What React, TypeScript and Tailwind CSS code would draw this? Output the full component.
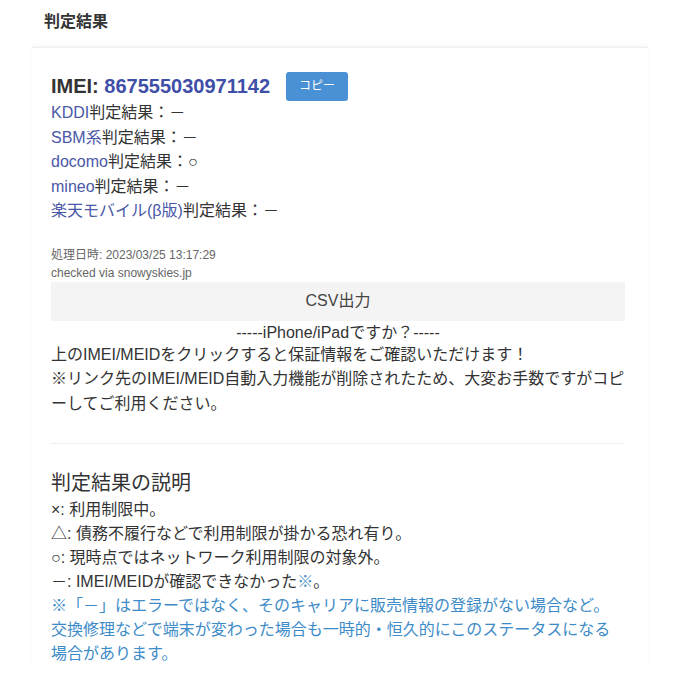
export default function App() {
  const carriers = [
    { name: "KDDI", result: "－" },
    { name: "SBM系", result: "－" },
    { name: "docomo", result: "○" },
    { name: "mineo", result: "－" },
    { name: "楽天モバイル(β版)", result: "－" },
  ];

  return (
    <div
      className="min-h-[680px] bg-white text-[#333]"
      style={{ fontFamily: '"Liberation Sans", "Noto Sans CJK JP", sans-serif' }}
    >
      <div className="px-[44px] pt-[12px] pb-[15px] text-[16px] font-bold leading-[20px]">判定結果</div>
      <div className="mx-[32px] border-t border-[#f0f0f0] shadow-[0_-2px_3px_rgba(0,0,0,0.04)]">
        <div className="pl-[19px] pr-[23px] pt-[23px]">
          <div className="flex items-center gap-[16px]">
            <div className="text-[20px] font-bold leading-[30px]">
              IMEI: <span className="text-[#3f4fa8]">867555030971142</span>
            </div>
            <button className="h-[29px] rounded-[3px] bg-[#4a90d4] px-[13px] text-[12px] text-white">
              コピー
            </button>
          </div>
          <ul className="text-[16px] leading-[24.5px]">
            {carriers.map((c) => (
              <li key={c.name}>
                <span className="text-[#4a58a8]">{c.name}</span>判定結果：{c.result}
              </li>
            ))}
          </ul>

          <div className="mt-[22px] text-[12px] leading-[18px] text-[#666]">
            <div>処理日時: 2023/03/25 13:17:29</div>
            <div>checked via snowyskies.jp</div>
          </div>
          <button className="mt-0 h-[39px] w-full bg-[#f4f4f4] text-[16px] text-[#444]">CSV出力</button>
          <div className="mt-[2px] text-center text-[16px] leading-[20px]">-----iPhone/iPadですか？-----</div>
          <p className="text-[16px] leading-[24.5px]">
            上のIMEI/MEIDをクリックすると保証情報をご確認いただけます！
            <br />
            ※リンク先のIMEI/MEID自動入力機能が削除されたため、大変お手数ですがコピ
            <br />
            ーしてご利用ください。
          </p>
          <hr className="mt-[27px] border-[#eee]" />

          <div className="mt-[24px] text-[20px] leading-[30px]">判定結果の説明</div>
          <div className="text-[16px] leading-[24px]">
            <div>×: 利用制限中。</div>
            <div>△: 債務不履行などで利用制限が掛かる恐れ有り。</div>
            <div>○: 現時点ではネットワーク利用制限の対象外。</div>
            <div>
              －: IMEI/MEIDが確認できなかった<span className="text-[#4a90c9]">※</span>。
            </div>
            <div className="text-[#3d8bc8]">
              ※「－」はエラーではなく、そのキャリアに販売情報の登録がない場合など。
              <br />
              交換修理などで端末が変わった場合も一時的・恒久的にこのステータスになる
              <br />
              場合があります。
            </div>
          </div>
        </div>
      </div>
    </div>
  );
}
